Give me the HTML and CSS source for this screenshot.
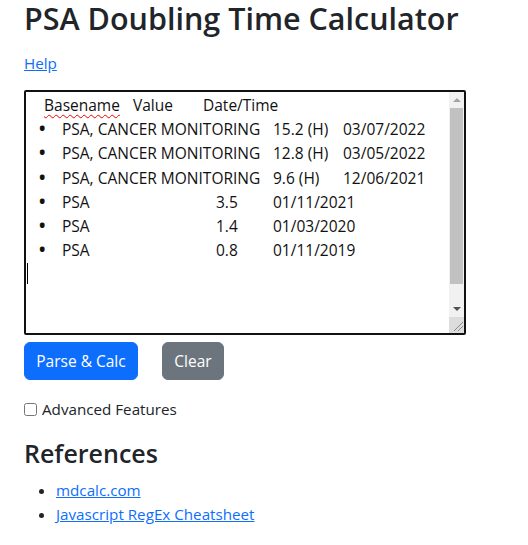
FILE: index.html
```html
<!DOCTYPE html>
<html lang="en">
<head>
<meta charset="utf-8">
<title>PSA Doubling Time Calculator</title>
<link rel="stylesheet" href="styles.css">
</head>
<body>
<div class="page">
  <h1 class="title">PSA Doubling Time Calculator</h1>
  <p class="help"><a href="#">Help</a></p>

  <div class="editor">
    <div class="editor-content">
      <div class="line header">
        <span class="misspelled">Basename</span><span>Value</span><span>Date/Time</span>
      </div>
      <div class="line row-long"><span class="dot">•</span><span>PSA, CANCER MONITORING</span><span>15.2 (H)</span><span>03/07/2022</span></div>
      <div class="line row-long"><span class="dot">•</span><span>PSA, CANCER MONITORING</span><span>12.8 (H)</span><span>03/05/2022</span></div>
      <div class="line row-long"><span class="dot">•</span><span>PSA, CANCER MONITORING</span><span>9.6 (H)</span><span>12/06/2021</span></div>
      <div class="line row-short"><span class="dot">•</span><span>PSA</span><span>3.5</span><span>01/11/2021</span></div>
      <div class="line row-short"><span class="dot">•</span><span>PSA</span><span>1.4</span><span>01/03/2020</span></div>
      <div class="line row-short"><span class="dot">•</span><span>PSA</span><span>0.8</span><span>01/11/2019</span></div>
      <div class="line caret-line"><span class="caret"></span></div>
    </div>
    <div class="scrollbar">
      <div class="sb-btn sb-up"><span class="tri-up"></span></div>
      <div class="sb-track">
        <div class="sb-thumb"></div>
      </div>
      <div class="sb-btn sb-down"><span class="tri-down"></span></div>
      <div class="sb-corner">
        <svg width="15" height="15" viewBox="0 0 15 15"><path d="M14 5 L5 14 M14 9 L9 14" stroke="#8a8a8a" stroke-width="1" fill="none"/></svg>
      </div>
    </div>
  </div>

  <div class="actions">
    <button class="btn btn-primary" type="button">Parse &amp; Calc</button>
    <button class="btn btn-secondary" type="button">Clear</button>
  </div>

  <label class="check"><input type="checkbox"> Advanced Features</label>

  <h2 class="refs-title">References</h2>
  <ul class="refs">
    <li><a href="#">mdcalc.com</a></li>
    <li><a href="#">Javascript RegEx Cheatsheet</a></li>
  </ul>
</div>
</body>
</html>
```

FILE: styles.css
```css
* { box-sizing: border-box; }

html, body {
  margin: 0;
  padding: 0;
  background: #fff;
}

body {
  font-family: "Open Sans", "Noto Sans", sans-serif;
  font-size: 15.2px;
  line-height: 24px;
  color: #212529;
}

a { color: #0d6efd; text-decoration: underline; }

.page {
  padding: 0 24px;
}

.title {
  margin: 0;
  font-size: 30.5px;
  font-weight: 600;
  line-height: 36px;
  white-space: nowrap;
}

.help {
  margin: 15px 0 15px;
  line-height: 24px;
}

.editor {
  width: 442px;
  height: 245px;
  border: 2px solid #111;
  border-radius: 2px;
  display: flex;
  background: #fff;
}

.editor-content {
  flex: 1;
  padding: 1px 0 0 0;
  font-size: 15.5px;
  line-height: 24.2px;
  color: #111;
  overflow: hidden;
}

.line {
  display: grid;
  white-space: pre;
  height: 24.2px;
}

.header {
  padding-left: 18px;
  grid-template-columns: 89px 70px auto;
}

.misspelled {
  text-decoration: underline wavy #e00;
  text-decoration-thickness: 1px;
  text-underline-offset: 3px;
}

.row-long {
  padding-left: 13px;
  grid-template-columns: 23px 211px 70px auto;
}

.row-short {
  padding-left: 13px;
  grid-template-columns: 23px 154px 57px auto;
}

.dot { font-size: 17px; font-weight: 700; line-height: 24px; }

.caret-line { display: block; padding-left: 1px; }
.caret {
  display: inline-block;
  width: 1px;
  height: 21px;
  background: #000;
  vertical-align: -4px;
}

.scrollbar {
  width: 15px;
  display: flex;
  flex-direction: column;
  background: #f1f1f1;
}

.sb-btn {
  height: 16px;
  display: flex;
  align-items: center;
  justify-content: center;
}

.tri-up {
  width: 0; height: 0;
  border-left: 4px solid transparent;
  border-right: 4px solid transparent;
  border-bottom: 4px solid #a3a3a3;
}

.tri-down {
  width: 0; height: 0;
  border-left: 4px solid transparent;
  border-right: 4px solid transparent;
  border-top: 4px solid #505050;
}

.sb-track {
  flex: 1;
  display: flex;
  flex-direction: column;
  padding: 0 1px 15px 1px;
}

.sb-thumb {
  height: 176px;
  background: #c1c1c1;
}

.sb-corner {
  height: 16px;
  background: #dcdcdc;
  line-height: 0;
}

.actions {
  display: flex;
  gap: 24px;
  margin-top: 7px;
}

.btn {
  font-family: inherit;
  font-size: 15.5px;
  line-height: 24px;
  height: 38px;
  padding: 6px 0;
  border-radius: 6px;
  border: 1px solid transparent;
  color: #fff;
  white-space: nowrap;
  text-align: center;
  cursor: pointer;
}

.btn-primary { background: #0d6efd; border-color: #0d6efd; width: 114px; }
.btn-secondary { background: #6c757d; border-color: #6c757d; width: 62px; }

.check {
  display: flex;
  align-items: center;
  gap: 5px;
  margin-top: 17px;
  line-height: 24px;
}

.check input {
  margin: 0;
  width: 13px;
  height: 13px;
}

.refs-title {
  margin: 17px 0 9px;
  font-size: 25px;
  font-weight: 600;
  line-height: 31px;
}

.refs {
  margin: 0;
  padding-left: 32px;
}

.refs li { line-height: 24px; }
```
